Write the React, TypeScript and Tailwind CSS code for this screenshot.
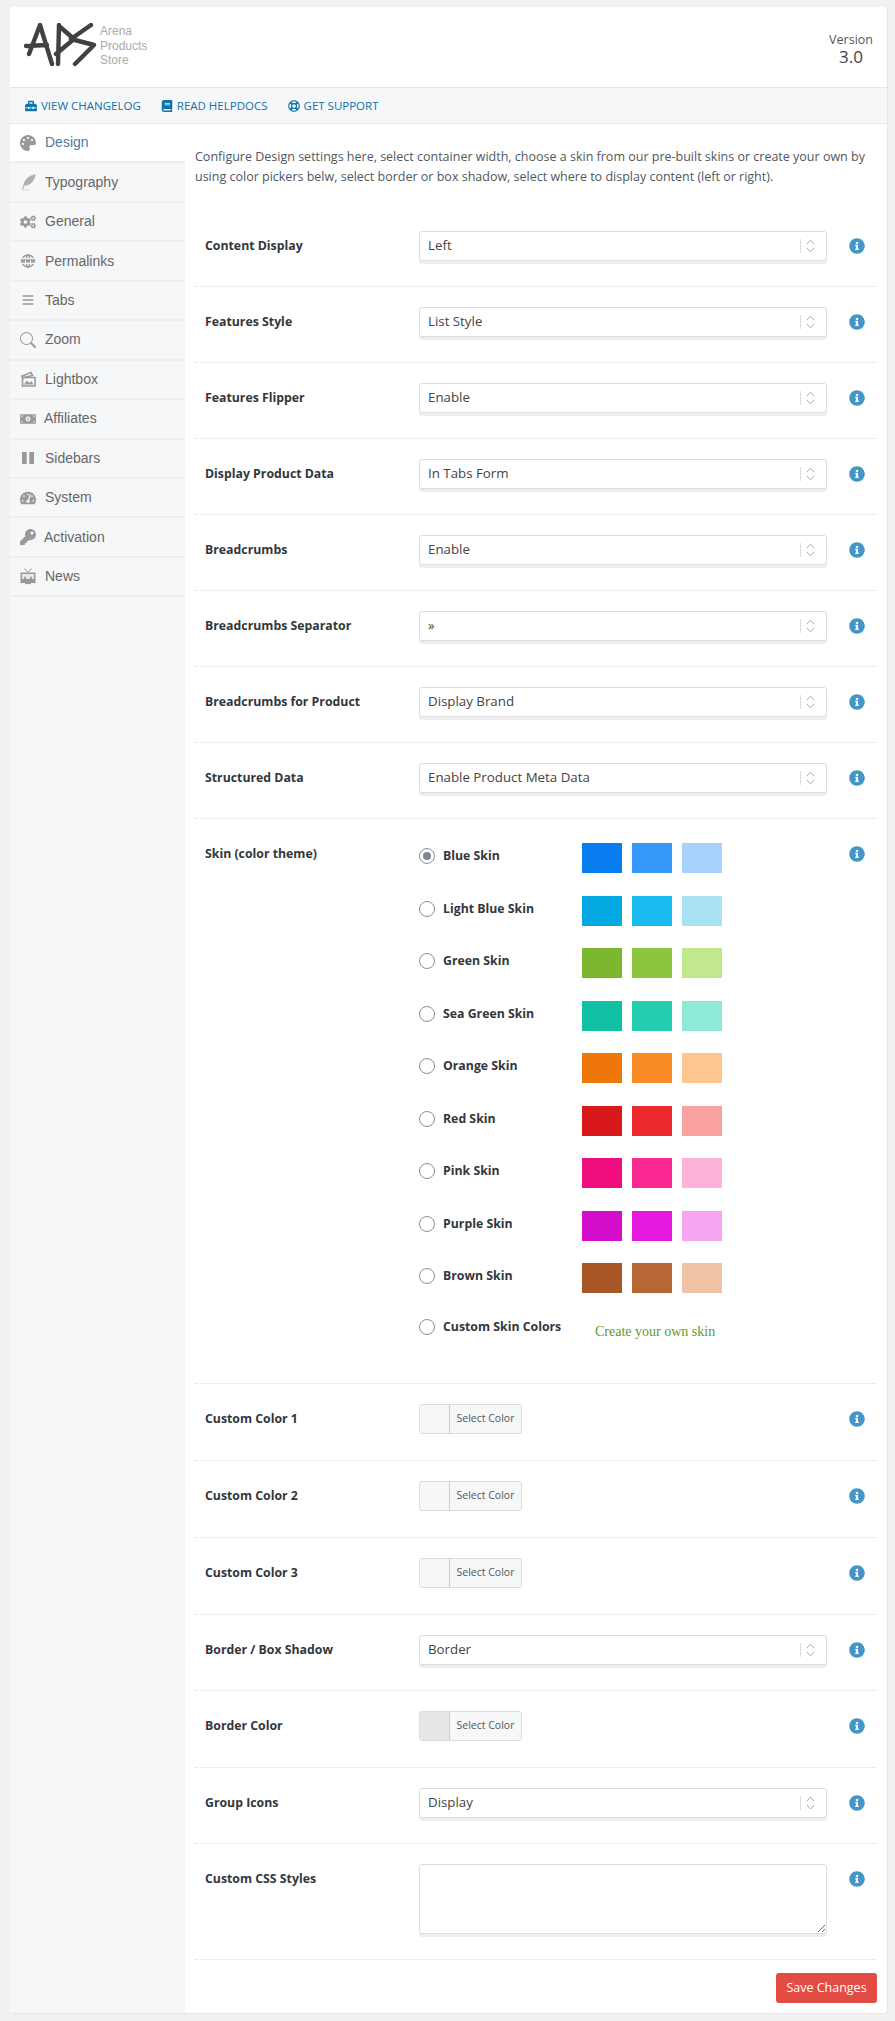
import type { ReactNode } from 'react';
import {
  FaBook,
  FaCogs,
  FaInfoCircle,
  FaKey,
  FaMoneyBillAlt,
  FaPalette,
  FaRegLifeRing,
  FaTachometerAlt,
  FaToolbox,
} from 'react-icons/fa';
import { BsSearch } from 'react-icons/bs';
import { HiMenu } from 'react-icons/hi';
import { TbWorldWww } from 'react-icons/tb';

function QuillIcon() {
  return (
    <svg width="16" height="17" viewBox="0 0 16 17" fill="none">
      <path d="M15.5 0.5C9.5 1 4.5 5 3.5 11L2 15l1 .4 1.6-3.8C10 11.5 14.5 7.5 15.5 .5z" fill="#b0b0b0" />
      <path d="M1 16h9" stroke="#dddddd" strokeWidth="1" />
    </svg>
  );
}

function LightboxIcon() {
  return (
    <svg width="16" height="16" viewBox="0 0 16 16" fill="none" stroke="currentColor" strokeWidth="1.6">
      <path d="M1 5.5L11 1.5l1.5 3L2 7" />
      <path d="M2.5 6.5h12.5V15H2.5z" />
      <path d="M4 13.5l3-4 2.5 2.5 2-2 2 3.5z" fill="currentColor" stroke="none" />
    </svg>
  );
}

function BarsIcon() {
  return (
    <svg width="16" height="16" viewBox="0 0 16 16" fill="currentColor">
      <rect x="2" y="2" width="4.7" height="12" />
      <rect x="9.3" y="2" width="4.7" height="12" />
    </svg>
  );
}

function TvIcon() {
  return (
    <svg width="16" height="17" viewBox="0 0 16 17" fill="none">
      <path d="M4.5 .5L8 4.5l3.5-4" stroke="currentColor" strokeWidth="1" />
      <rect x="0.5" y="4.5" width="15" height="10.5" fill="currentColor" />
      <rect x="2" y="6" width="12" height="5" fill="#e8e8e8" />
      <path d="M3.5 11l1.5-3 1.5 3zM9.5 11l1.5-3 1.5 3z" fill="currentColor" />
      <path d="M5 15.5h6" stroke="currentColor" strokeWidth="1.2" />
    </svg>
  );
}

const menu = [
  { name: 'Design', icon: <FaPalette /> },
  { name: 'Typography', icon: <QuillIcon /> },
  { name: 'General', icon: <FaCogs /> },
  { name: 'Permalinks', icon: <TbWorldWww /> },
  { name: 'Tabs', icon: <HiMenu /> },
  { name: 'Zoom', icon: <BsSearch /> },
  { name: 'Lightbox', icon: <LightboxIcon /> },
  { name: 'Affiliates', icon: <FaMoneyBillAlt />, tight: true },
  { name: 'Sidebars', icon: <BarsIcon /> },
  { name: 'System', icon: <FaTachometerAlt /> },
  { name: 'Activation', icon: <FaKey />, tight: true },
  { name: 'News', icon: <TvIcon /> },
];

const skins = [
  { name: 'Blue Skin', colors: ['bg-[#087df0]', 'bg-[#3599fb]', 'bg-[#a8d2fd]'] },
  { name: 'Light Blue Skin', colors: ['bg-[#03a9e0]', 'bg-[#19bbef]', 'bg-[#a9e2f5]'] },
  { name: 'Green Skin', colors: ['bg-[#7cb82f]', 'bg-[#8cc63f]', 'bg-[#c1e88c]'] },
  { name: 'Sea Green Skin', colors: ['bg-[#10c0a2]', 'bg-[#25ceb1]', 'bg-[#8ee9d9]'] },
  { name: 'Orange Skin', colors: ['bg-[#ee7508]', 'bg-[#f88b25]', 'bg-[#fdc590]'] },
  { name: 'Red Skin', colors: ['bg-[#d9181b]', 'bg-[#ec2a2c]', 'bg-[#f9a0a0]'] },
  { name: 'Pink Skin', colors: ['bg-[#f00d80]', 'bg-[#fb2a93]', 'bg-[#fdb2d9]'] },
  { name: 'Purple Skin', colors: ['bg-[#d40dcb]', 'bg-[#e61ade]', 'bg-[#f5a5f2]'] },
  { name: 'Brown Skin', colors: ['bg-[#a85623]', 'bg-[#b76733]', 'bg-[#f0c2a6]'] },
];

function Row({ label, children, tall, picker }: { label: string; children: ReactNode; tall?: boolean; picker?: boolean }) {
  return (
    <div className={`flex items-start border-b border-dotted border-[#dddddd] pl-[10px] ${tall ? 'pt-[24px]' : picker ? 'pt-[20px] pb-[26px]' : 'pt-[20px] pb-[25px]'}`}>
      <div className={`w-[214px] shrink-0 text-[12.3px] leading-[18px] font-bold text-[#32373c] ${tall ? 'pt-[2px]' : 'pt-[6px]'}`}>{label}</div>
      <div className="w-[408px] shrink-0">{children}</div>
      <div className={`ml-[22px] text-[16px] text-[#4396c7] ${tall ? 'pt-[3px]' : 'pt-[7px]'}`}>
        <FaInfoCircle />
      </div>
    </div>
  );
}

function Select({ value }: { value: string }) {
  return (
    <div className="flex h-[30px] items-center rounded-[3px] border border-[#dddddd] bg-white pr-[11px] pl-[8px] text-[13.3px] text-[#444444] shadow-[0_3px_0_#eeeeee]">
      <span className="flex-1">{value}</span>
      <span className="flex h-[14px] items-center border-l border-[#dddddd] pl-[5px]">
        <svg width="9" height="14" viewBox="0 0 9 14" fill="none" stroke="#aaaaaa" strokeWidth="1">
          <path d="M1 5l3.5-4L8 5M1 9l3.5 4L8 9" />
        </svg>
      </span>
    </div>
  );
}

function ColorPicker({ swatch = 'bg-[#f6f7f7]' }: { swatch?: string }) {
  return (
    <div className="flex h-[30px] w-[103px] overflow-hidden rounded-[3px] border border-[#dcdcde] bg-[#f6f7f7] text-[10.5px] text-[#50575e]">
      <span className={`w-[30px] border-r border-[#cccccc] ${swatch}`} />
      <span className="flex flex-1 items-center justify-center">Select Color</span>
    </div>
  );
}

function Radio({ checked }: { checked?: boolean }) {
  return (
    <span className="mt-[5px] mr-[8px] flex h-[16px] w-[16px] shrink-0 items-center justify-center rounded-full border border-[#8c8f94] bg-white">
      {checked && <span className="h-[8px] w-[8px] rounded-full bg-[#7e8993]" />}
    </span>
  );
}

function Logo() {
  return (
    <svg width="74" height="46" viewBox="0 0 74 46" fill="none" stroke="#414141" strokeWidth="4.4" strokeLinecap="round" strokeLinejoin="round">
      <path d="M16 2L5 31M16 2l12 39M2 23l21-1" />
      <path d="M35 2l-1 39M35 3l15 13-18 15" />
      <path d="M67 2L47 16l23 6-19 19" />
    </svg>
  );
}

export default function App() {
  return (
    <div className="min-h-[2021px] bg-[#f1f1f1] px-[8px] pt-[7px] pb-[9px] font-['Open_Sans',sans-serif] text-[12.5px]">
      <div className="ml-[2px] w-[878px] overflow-hidden rounded-[4px] border border-[#e5e5e5] border-t-0 border-l-0 bg-white">
        <header className="flex h-[81px] items-center border-b border-[#e7e7e7] pr-[14px] pb-[2px] pl-[14px]">
          <Logo />
          <div className="ml-[2px] font-['Liberation_Sans',sans-serif] text-[12px] leading-[14.6px] text-[#aaaaaa]">
            <div>Arena</div>
            <div>Products</div>
            <div>Store</div>
          </div>
          <div className="mt-[6px] ml-auto text-center text-[#50575e]">
            <div className="text-[12.5px] leading-[16px]">Version</div>
            <div className="text-[17px] leading-[18px] font-medium text-[#3c434a]">3.0</div>
          </div>
        </header>

        <nav className="flex h-[36px] items-center gap-[20px] border-b border-[#e9e9e9] bg-[#f6f7f9] pl-[15px] text-[11.5px] text-[#0f74a8]">
          <a className="flex items-center gap-[4px]">
            <FaToolbox className="text-[12px]" /> VIEW CHANGELOG
          </a>
          <a className="flex items-center gap-[4px]">
            <FaBook className="text-[12px]" /> READ HELPDOCS
          </a>
          <a className="flex items-center gap-[4px]">
            <FaRegLifeRing className="text-[12px]" /> GET SUPPORT
          </a>
        </nav>

        <div className="flex">
          <aside className="w-[175px] shrink-0 bg-[#f6f7f9] font-['Liberation_Sans',sans-serif] text-[14px]">
            {menu.map((item, i) => (
              <div
                key={item.name}
                className={`flex h-[39.45px] items-center border-b-2 border-[#edeef0] pl-[10px] ${i === 0 ? 'bg-white text-[#54799c]' : 'text-[#666666]'}`}
              >
                <span className="flex w-[16px] justify-center text-[16px] text-[#999999]">{item.icon}</span>
                <span className={item.tight ? 'ml-[8px]' : 'ml-[9px]'}>{item.name}</span>
              </div>
            ))}
          </aside>

          <main className="min-w-0 flex-1 px-[10px]">
            <p className="mt-[23px] mb-[24px] leading-[20px] text-[#50575e]">
              Configure Design settings here, select container width, choose a skin from our pre-built skins or create your own by using color pickers belw, select border or box shadow, select where to display content (left or right).
            </p>

            <Row label="Content Display"><Select value="Left" /></Row>
            <Row label="Features Style"><Select value="List Style" /></Row>
            <Row label="Features Flipper"><Select value="Enable" /></Row>
            <Row label="Display Product Data"><Select value="In Tabs Form" /></Row>
            <Row label="Breadcrumbs"><Select value="Enable" /></Row>
            <Row label="Breadcrumbs Separator"><Select value="»" /></Row>
            <Row label="Breadcrumbs for Product"><Select value="Display Brand" /></Row>
            <Row label="Structured Data"><Select value="Enable Product Meta Data" /></Row>

            <Row label="Skin (color theme)" tall>
              <div className="h-[540px]">
                {skins.map((skin, i) => (
                  <div key={skin.name} className="mb-[22.5px] flex h-[30px] items-start">
                    <Radio checked={i === 0} />
                    <span className="w-[139px] pt-[4px] text-[12.3px] leading-[18px] font-bold text-[#32373c]">{skin.name}</span>
                    <span className="flex gap-[10px]">
                      {skin.colors.map((c) => (
                        <span key={c} className={`h-[30px] w-[40px] ${c}`} />
                      ))}
                    </span>
                  </div>
                ))}
                <div className="-mt-[2px] flex items-start">
                  <Radio />
                  <span className="w-[152px] pt-[4px] text-[12.3px] leading-[18px] font-bold text-[#32373c]">Custom Skin Colors</span>
                  <span className="pt-[7px] font-['Liberation_Serif',serif] text-[14px] text-[#5d9b2b]">Create your own skin</span>
                </div>
              </div>
            </Row>

            <Row label="Custom Color 1" picker><ColorPicker /></Row>
            <Row label="Custom Color 2" picker><ColorPicker /></Row>
            <Row label="Custom Color 3" picker><ColorPicker /></Row>
            <Row label="Border / Box Shadow"><Select value="Border" /></Row>
            <Row label="Border Color" picker><ColorPicker swatch="bg-[#e6e7e8]" /></Row>
            <Row label="Group Icons"><Select value="Display" /></Row>
            <Row label="Custom CSS Styles">
              <textarea className="block h-[70px] w-full rounded-[3px] border border-[#dddddd] bg-white shadow-[0_3px_0_#eeeeee]" />
            </Row>

            <div className="flex justify-end pt-[13px] pb-[10px]">
              <button className="h-[30px] w-[101px] rounded-[3px] bg-[#e34c43] text-[12.5px] text-white">Save Changes</button>
            </div>
          </main>
        </div>
      </div>
    </div>
  );
}
